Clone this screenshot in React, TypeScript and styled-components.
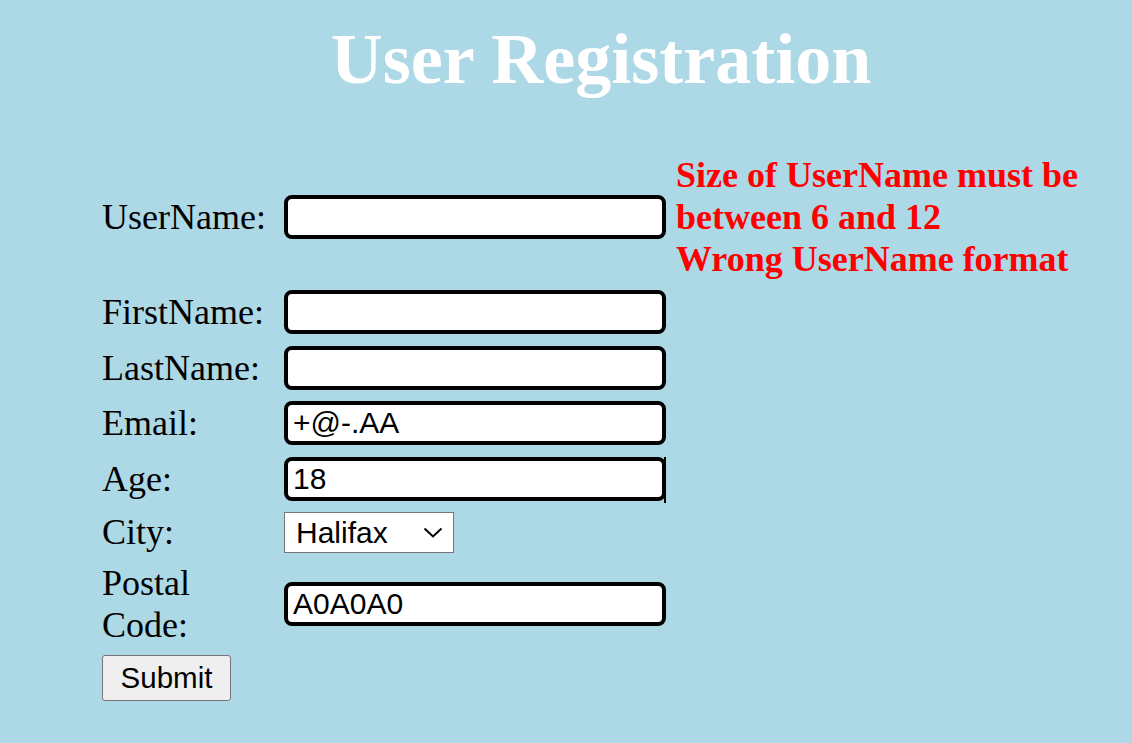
import React from "react";
import styled, { createGlobalStyle } from "styled-components";

const GlobalStyle = createGlobalStyle`
  html, body {
    background: #add8e6;
  }
  body {
    margin: 0;
    padding: 8px;
    font-family: "Liberation Serif", "Times New Roman", serif;
    color: #000;
  }
`;

const Page = styled.div`
  display: flex;
  flex-direction: column;
  padding-left: 94px;
`;

const Title = styled.h1`
  margin: 10px 24px 52.5px 0;
  font-family: "Liberation Serif", "Times New Roman", serif;
  font-size: 72px;
  font-weight: bold;
  color: #fff;
  text-align: center;
  line-height: normal;
`;

const Form = styled.form`
  display: grid;
  grid-template-columns: 182px 382px 1fr;
  row-gap: 8.8px;
  align-items: center;
`;

const Label = styled.label`
  font-size: 36px;
  line-height: 42px;
`;

const InputCell = styled.div<{ $spinEdge?: boolean }>`
  position: relative;
  display: flex;
  align-items: center;
  padding: 1.5px 0;

  &::after {
    content: "";
    display: ${(p) => (p.$spinEdge ? "block" : "none")};
    position: absolute;
    left: 380px;
    top: 1.5px;
    width: 2px;
    height: 46px;
    background: #000;
  }
`;

const TextInput = styled.input`
  box-sizing: border-box;
  width: 382px;
  height: 44px;
  border: 4px solid #000;
  border-radius: 8px;
  padding: 0 5px;
  background: #fff;
  font-family: "Liberation Sans", Arial, sans-serif;
  font-size: 30px;
  color: #000;
  outline: none;
  margin: 0;
`;

const SelectCell = styled.div`
  position: relative;
  display: flex;
  align-items: center;
  width: 170px;
`;

const Select = styled.select`
  box-sizing: border-box;
  appearance: none;
  -webkit-appearance: none;
  width: 170px;
  height: 41px;
  border: 1px solid #767676;
  border-radius: 0;
  background: #fff;
  font-family: "Liberation Sans", Arial, sans-serif;
  font-size: 30px;
  color: #000;
  margin: 0;
  padding: 0 0 0 11px;
  outline: none;
`;

const Chevron = styled.svg`
  position: absolute;
  left: 139px;
  top: 15px;
  width: 20px;
  height: 11px;
  pointer-events: none;
`;

const Errors = styled.div`
  padding-left: 10px;
  color: #ff0000;
  font-weight: bold;
  font-size: 36px;
  line-height: 42px;
  display: flex;
  flex-direction: column;
`;

const Spacer = styled.div``;

const SubmitButton = styled.button`
  box-sizing: border-box;
  width: 129px;
  height: 46px;
  padding: 0;
  border: 1px solid #767676;
  border-radius: 3px;
  background: #efefef;
  font-family: "Liberation Sans", Arial, sans-serif;
  font-size: 29.5px;
  color: #000;
  justify-self: start;
`;

export default function App() {
  return (
    <>
      <GlobalStyle />
      <Page>
        <Title>User Registration</Title>
        <Form onSubmit={(e) => e.preventDefault()}>
          <Label>UserName:</Label>
          <InputCell>
            <TextInput type="text" defaultValue="" />
          </InputCell>
          <Errors>
            <span>Size of UserName must be between 6 and 12</span>
            <span>Wrong UserName format</span>
          </Errors>

          <Label>FirstName:</Label>
          <InputCell>
            <TextInput type="text" defaultValue="" />
          </InputCell>
          <Spacer />

          <Label>LastName:</Label>
          <InputCell>
            <TextInput type="text" defaultValue="" />
          </InputCell>
          <Spacer />

          <Label>Email:</Label>
          <InputCell>
            <TextInput type="text" defaultValue="+@-.AA" />
          </InputCell>
          <Spacer />

          <Label>Age:</Label>
          <InputCell $spinEdge>
            <TextInput type="text" defaultValue="18" />
          </InputCell>
          <Spacer />

          <Label>City:</Label>
          <SelectCell>
            <Select defaultValue="Halifax">
              <option>Halifax</option>
              <option>Toronto</option>
              <option>Montreal</option>
            </Select>
            <Chevron viewBox="0 0 20 11">
              <polyline
                points="1.5,1.5 10,9.5 18.5,1.5"
                fill="none"
                stroke="#000"
                strokeWidth="2"
              />
            </Chevron>
          </SelectCell>
          <Spacer />

          <Label>Postal Code:</Label>
          <InputCell>
            <TextInput type="text" defaultValue="A0A0A0" />
          </InputCell>
          <Spacer />

          <SubmitButton type="submit">Submit</SubmitButton>
        </Form>
      </Page>
    </>
  );
}
